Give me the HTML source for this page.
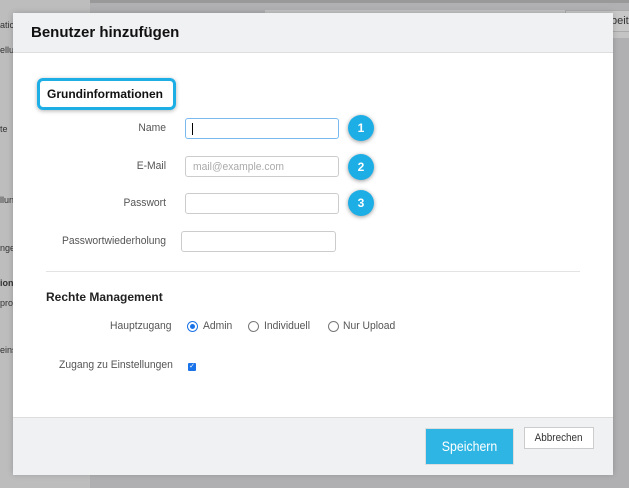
<!DOCTYPE html>
<html><head><style>
body{margin:0;width:629px;height:488px;overflow:hidden;font-family:"Liberation Sans",sans-serif;background:#b0b0b2;position:relative}
.a{position:absolute}
.side{left:0;top:0;width:90px;height:488px;background:#bdbdbd}
.st{font-size:9px;color:#333;left:0}
.modal{left:13px;top:13px;width:600px;height:461px;background:#fff;box-shadow:0 0 6px rgba(0,0,0,.2)}
.hd{left:0;top:0;width:600px;height:39px;background:#f0f1f3;border-bottom:1px solid #ddd}
.ft{left:0;top:404px;width:600px;height:57px;background:#f0f1f3;border-top:1px solid #ddd}
.lbl{font-size:11px;color:#555;text-align:right;width:140px;transform:scaleX(.94);transform-origin:right;white-space:nowrap}
.inp{border:1px solid #ccc;border-radius:3px;height:21px;background:#fff;box-sizing:border-box}
.c{width:26px;height:26px;border-radius:50%;background:#1eaee6;color:#fff;font-size:12px;font-weight:bold;text-align:center;line-height:26px;box-shadow:0 1px 4px rgba(0,0,0,.4)}
.r{width:9px;height:9px;border:1px solid #777;border-radius:50%}
.t{font-size:11px;color:#555;transform:scaleX(.94);transform-origin:left;white-space:nowrap}
</style></head><body>
<div class="a side"></div>
<div class="a" style="left:90px;top:0;width:539px;height:3px;background:#999"></div>
<div class="a" style="left:265px;top:10px;width:364px;height:28px;background:#c4c4c4"></div>
<div class="a" style="left:565px;top:10px;width:64px;height:20px;border:1px solid #aaa;background:#c8c8c8;font-size:11px;color:#333;line-height:20px;text-indent:45px">beit</div>
<div class="a st" style="top:20px">atic</div>
<div class="a st" style="top:45px">ellu</div>
<div class="a st" style="top:124px">te</div>
<div class="a st" style="top:195px">llun</div>
<div class="a st" style="top:243px">ngel</div>
<div class="a st" style="top:278px;font-weight:bold">ion</div>
<div class="a st" style="top:298px">pro</div>
<div class="a st" style="top:345px">eins</div>
<div class="a modal">
<div class="a hd"><div class="a" style="left:18px;top:11px;font-size:15px;font-weight:bold;color:#111">Benutzer hinzufügen</div></div>
<div class="a" style="left:24px;top:65px;width:133px;height:26px;border:3px solid #1eaee6;border-radius:6px;box-shadow:0 1px 4px rgba(0,0,0,.3);font-size:12px;font-weight:bold;line-height:26px;text-indent:7px;color:#111">Grundinformationen</div>
<div class="a lbl" style="left:13px;top:109px">Name</div>
<div class="a inp" style="left:172px;top:105px;width:154px;border-color:#7ab8f0"><div class="a" style="left:6px;top:4px;width:1px;height:12px;background:#000"></div></div>
<div class="a c" style="left:335px;top:102px">1</div>
<div class="a lbl" style="left:13px;top:147px">E-Mail</div>
<div class="a inp" style="left:172px;top:143px;width:154px"><span class="a t" style="left:7px;top:4px;color:#aaa">mail@example.com</span></div>
<div class="a c" style="left:335px;top:141px">2</div>
<div class="a lbl" style="left:13px;top:184px">Passwort</div>
<div class="a inp" style="left:172px;top:180px;width:154px"></div>
<div class="a c" style="left:335px;top:177px">3</div>
<div class="a lbl" style="left:13px;top:222px">Passwortwiederholung</div>
<div class="a inp" style="left:168px;top:218px;width:155px"></div>
<div class="a" style="left:33px;top:258px;width:534px;height:1px;background:#e3e3e3"></div>
<div class="a" style="left:33px;top:277px;font-size:12px;font-weight:bold;color:#222">Rechte Management</div>
<div class="a t" style="left:97px;top:307px">Hauptzugang</div>
<div class="a r" style="left:174px;top:308px;border-color:#1a73e8"><div class="a" style="left:2px;top:2px;width:5px;height:5px;border-radius:50%;background:#1a73e8"></div></div>
<div class="a t" style="left:190px;top:307px">Admin</div>
<div class="a r" style="left:235px;top:308px"></div>
<div class="a t" style="left:251px;top:307px">Individuell</div>
<div class="a r" style="left:315px;top:308px"></div>
<div class="a t" style="left:330px;top:307px">Nur Upload</div>
<div class="a t" style="left:46px;top:346px">Zugang zu Einstellungen</div>
<div class="a" style="left:175px;top:350px;width:8px;height:8px;background:#1a73e8;border-radius:1px;color:#fff;font-size:7px;line-height:8px;text-align:center">✓</div>
<div class="a ft">
<div class="a" style="left:412px;top:10px;width:89px;height:37px;background:#2fb5e3;border:1px solid #ddd;box-sizing:border-box;color:#fff;font-size:14px;text-align:center;line-height:35px"><span style="display:inline-block;transform:scaleX(.88)">Speichern</span></div>
<div class="a" style="left:511px;top:9px;width:70px;height:22px;background:#fff;border:1px solid #ccc;box-sizing:border-box;color:#333;font-size:11px;text-align:center;line-height:20px"><span style="display:inline-block;transform:scaleX(.9)">Abbrechen</span></div>
</div>
</div>
</body></html>
